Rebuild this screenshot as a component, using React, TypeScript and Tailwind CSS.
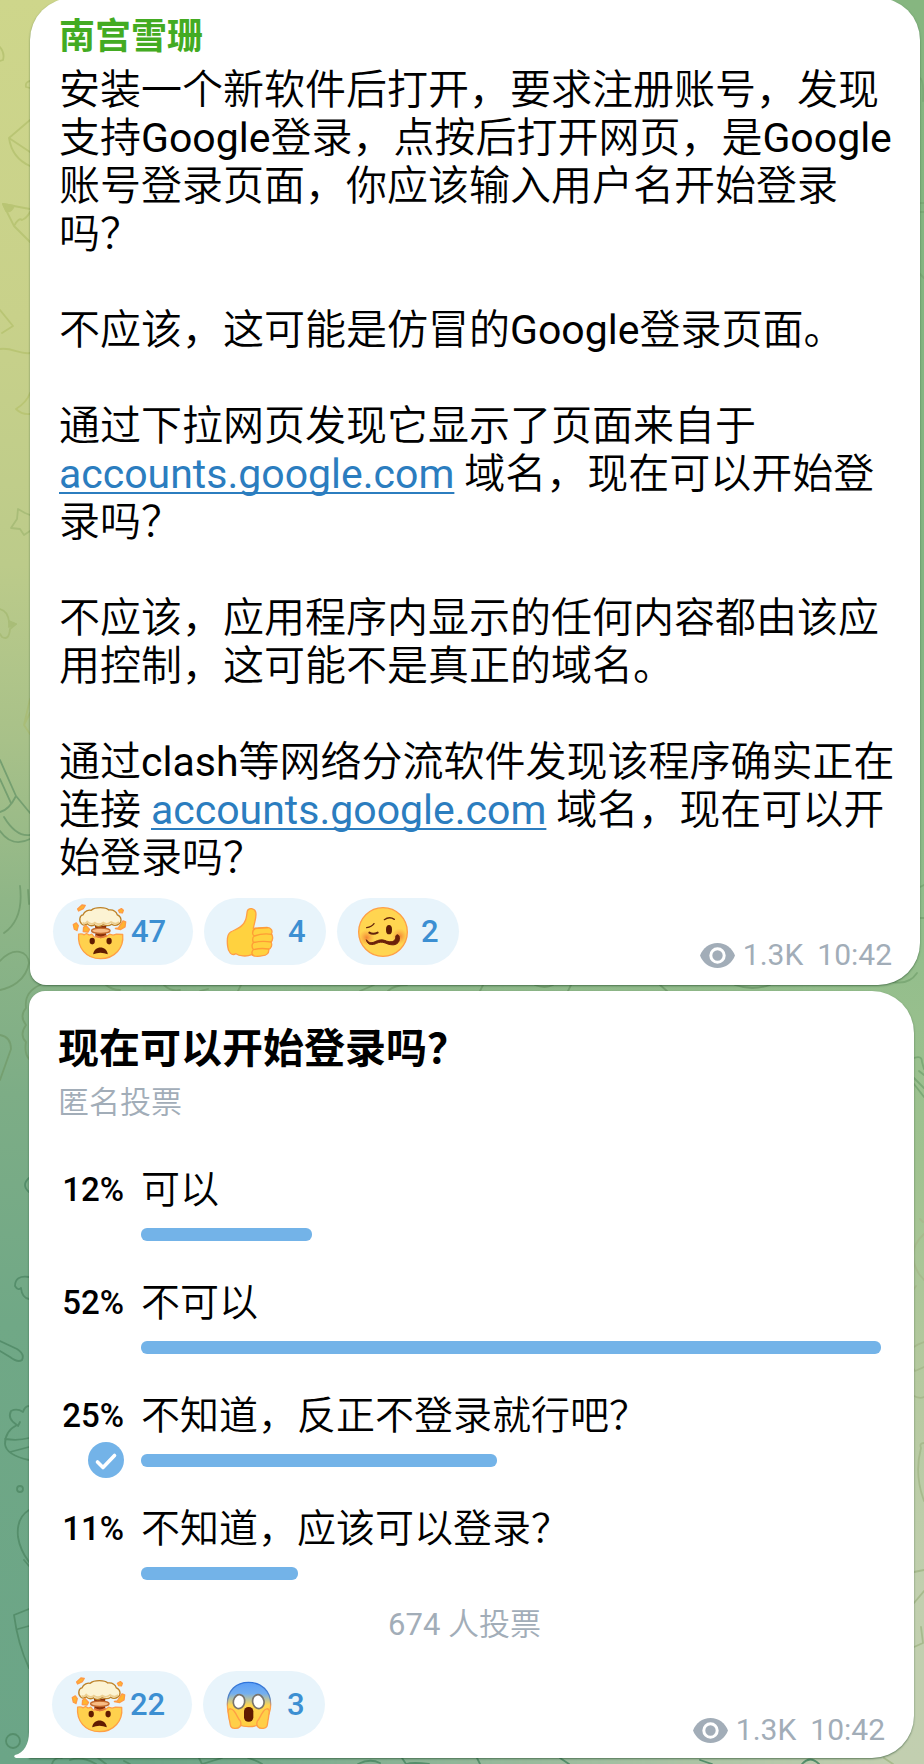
import type { ReactNode } from 'react';

const Exploding = () => (
  <svg aria-hidden="true" className="size-[57px] shrink-0" viewBox="212 127 170 172">
    <path d="M234 221Q246 219 250 223L258 219L266 224L274 221L281 230L318 228L327 221L338 224L348 221L367 222C371 262 344 295 300 295C257 295 230 263 234 221Z" fill="#ffd14d" stroke="#ff9f45" strokeWidth="4" strokeLinejoin="round" />
    <path d="M284 226Q288 211 283 196H318Q313 211 318 226L301 233Z" fill="#8a2f08" />
    <ellipse cx="301" cy="211" rx="28" ry="8" fill="#f8bd86" stroke="#c56a2c" strokeWidth="4" />
    <path d="M284 225Q301 236 318 225" fill="none" stroke="#df7a3b" strokeWidth="5" />
    <path d="M243 190C233 180 238 164 247 163C252 151 264 147 272 149C283 138 317 139 325 148C340 146 348 155 351 163C364 168 365 184 356 190C346 197 338 194 334 191C324 199 314 195 308 193C300 200 288 199 282 193C270 199 264 194 260 190C252 195 246 194 243 190Z" fill="#fcf3d3" stroke="#bd8127" strokeWidth="4" />
    <path d="M246 186Q254 192 260 183Q272 195 283 186Q295 196 308 186Q320 194 332 184Q346 194 356 184" fill="none" stroke="#edcf91" strokeWidth="5" />
    <g fill="#ffb52e" stroke="#ff9a45" strokeWidth="4" strokeLinejoin="round">
      <path d="M231 145L244 133L254 134L248 144L234 151Z" />
      <path d="M354 149L363 144L369 149L366 157L358 156Z" />
      <path d="M218 192L227 187L233 195L229 210L221 206Z" />
      <path d="M249 200L256 195L267 207L262 215L248 213Z" />
      <path d="M354 202L368 181L376 184L374 199L361 207L345 204Z" />
    </g>
    <g fill="#601b00">
      <ellipse cx="275" cy="242" rx="8" ry="10" />
      <ellipse cx="326" cy="242" rx="8" ry="10" />
      <path d="M278 282C280 254 320 254 322 282Q300 272 278 282Z" />
    </g>
  </svg>
);

const Thumb = () => (
  <svg aria-hidden="true" className="size-[52px] shrink-0" viewBox="674 135 156 156">
    <path d="M744 150C748 139 766 141 769 153C773 168 765 185 762 202L803 199C816 199 821 211 816 219C822 226 821 237 815 243C820 252 815 262 808 265C810 276 801 284 790 284C774 288 765 287 757 281C741 288 719 285 710 278C697 286 686 273 685 256C683 240 682 220 694 213C709 205 722 201 729 192C744 179 741 162 744 150Z" fill="#ffd23f" stroke="#ff9f45" strokeWidth="4" strokeLinejoin="round" />
    <path d="M760 215C760 203 768 202 776 202L804 200M765 225Q790 216 817 220M762 245Q787 238 816 243M762 266Q785 260 808 264M765 225Q757 229 762 245Q754 253 762 266Q754 275 761 282M760 215Q759 221 765 225" fill="none" stroke="#ff9d35" strokeWidth="4" strokeLinecap="round" />
  </svg>
);

const Woozy = () => (
  <svg aria-hidden="true" className="size-[52px] shrink-0" viewBox="1072 135 156 156">
    <defs>
      <radialGradient id="blush">
        <stop offset="0" stopColor="#f07832" stopOpacity=".85" />
        <stop offset="1" stopColor="#f99a37" stopOpacity="0" />
      </radialGradient>
    </defs>
    <circle cx="1150" cy="213" r="73" fill="#ffd550" stroke="#ff9f45" strokeWidth="4" />
    <circle cx="1101" cy="230" r="24" fill="url(#blush)" />
    <circle cx="1200" cy="226" r="24" fill="url(#blush)" />
    <g fill="none" stroke="#63230b" strokeLinecap="round">
      <path d="M1101 200Q1116 198 1123 188" strokeWidth="4" />
      <path d="M1154 176Q1169 165 1184 175" strokeWidth="4" />
      <path d="M1109 215Q1120 222 1134 215" strokeWidth="6" />
    </g>
    <ellipse cx="1168" cy="206" rx="9" ry="14" fill="#5d1b05" />
    <path d="M1100 236C1103 253 1118 253 1131 247C1149 238 1158 249 1173 251C1194 255 1203 239 1198 225C1195 218 1187 222 1188 229C1188 242 1174 245 1160 240C1142 232 1132 240 1121 244C1110 248 1104 241 1100 236Z" fill="#6b210a" stroke="#6b210a" strokeWidth="3" strokeLinejoin="round" />
  </svg>
);

const Scream = () => (
  <svg aria-hidden="true" className="size-[52px] shrink-0" viewBox="671 355 156 156">
    <defs>
      <linearGradient id="fear" x1="0" y1="0" x2="0" y2="1">
        <stop offset="0" stopColor="#5b9ff7" />
        <stop offset=".25" stopColor="#72aef0" />
        <stop offset=".52" stopColor="#ffd64f" />
        <stop offset="1" stopColor="#ffcf42" />
      </linearGradient>
      <linearGradient id="fear-edge" x1="0" y1="0" x2="0" y2="1">
        <stop offset="0" stopColor="#2f74dc" />
        <stop offset=".35" stopColor="#5585c4" />
        <stop offset=".55" stopColor="#ff9f45" />
      </linearGradient>
    </defs>
    <path d="M684 431C684 389 711 365 748 365C786 365 814 391 814 431C814 469 791 498 748 498C705 498 684 470 684 431Z" fill="url(#fear)" stroke="url(#fear-edge)" strokeWidth="4" />
    <g fill="#ffcf48" stroke="#ff9f45" strokeWidth="4" strokeLinejoin="round">
      <path d="M686 452C688 441 699 443 704 451C713 462 715 474 723 481C729 496 719 505 705 503C689 503 694 486 689 474Z" />
      <path d="M810 452C808 441 798 443 793 451C784 462 782 474 774 481C768 496 778 505 792 503C808 503 803 486 807 474Z" />
    </g>
    <g fill="#fff" stroke="#77736c" strokeWidth="5">
      <ellipse cx="719" cy="423" rx="17" ry="21" transform="rotate(12 719 423)" />
      <ellipse cx="777" cy="423" rx="17" ry="21" transform="rotate(-12 777 423)" />
    </g>
    <rect x="734" y="439" width="28" height="44" rx="13" fill="#601b00" />
  </svg>
);

const Reaction = ({ label, count, wide, children }: { label: string; count: number; wide?: boolean; children: ReactNode }) => (
  <button
    type="button"
    aria-label={`${label} ${count}`}
    className={
      'flex h-[67px] items-center rounded-full bg-[#e8f4fb] text-[31px] leading-none font-medium text-[#3c8fd2] ' +
      (wide ? 'w-[140px] gap-[3px] pl-[18px]' : 'w-[122px] gap-3 pl-5')
    }
  >
    {children}
    <span>{count}</span>
  </button>
);

const Meta = () => (
  <div className="flex items-center text-[30px] leading-9 text-[#a2adb8]">
    <svg aria-hidden="true" className="mr-2 h-[25px] w-[35px]" viewBox="0 0 35 25">
      <path d="M0 12.5C3 5 9 0 17.5 0S32 5 35 12.5C32 20 26 25 17.5 25S3 20 0 12.5Z" fill="currentColor" />
      <circle cx="17.5" cy="12.5" r="6.7" fill="currentColor" stroke="#fff" strokeWidth="3" />
    </svg>
    <span className="mr-3.5">1.3K</span>
    <time>10:42</time>
  </div>
);

const Doodles = () => (
  <svg aria-hidden="true" className="absolute inset-0 h-full w-full" viewBox="0 0 924 1764" preserveAspectRatio="none" fill="none" strokeWidth="1.8" strokeLinecap="round" strokeLinejoin="round">
    <g stroke="#b9c574">
      <path d="M0 47Q5 53 3 60L0 61M30 81Q25 82 26 87L30 88M30 120L9 138Q12 158 30 166M9 138L30 152" />
      <path d="M3 204L14 226L30 242M3 204L30 209M14 226Q19 217 22 220Q27 218 30 212" />
      <path d="M3 204L14 206Q11 213 6 211Z" fill="#b9c574" />
      <path d="M0 310L13 326L2 333M0 349C12 347 20 355 30 353M30 393Q27 402 16 409Q22 415 30 414" />
    </g>
    <g stroke="#a9bd78">
      <path d="M30 515L25 513L18 509L17 519L11 528L20 529L24 535L30 531M0 609Q8 611 9 622L16 624L10 629Q9 641 2 637L0 634" />
      <path d="M9 621L16 624L9 627Z" fill="#a9bd78" />
      <path d="M30 699L24 725L30 734M24 725L30 713" />
    </g>
    <g stroke="#759f70">
      <path d="M0 760L16 796Q9 810 0 812M0 779L11 803M16 796L30 813M0 831Q12 848 30 839M4 817Q16 837 30 835" />
      <path d="M20 886Q24 919 4 933M28 890L29 904M0 961C14 946 28 951 29 963C26 981 10 988 0 990" />
      <path d="M40 985Q24 992 26 1008Q19 1016 26 1025Q19 1035 26 1042Q24 1053 29 1059M0 1035Q11 1037 11 1049L0 1080" />
      <path d="M106 985Q112 990 120 990M164 985Q171 992 180 990M200 991L208 989M241 985L238 991M360 991L374 985M388 991Q394 985 407 985M483 985L480 991M535 985Q545 989 553 985M571 985L568 991M660 985L667 991M735 985Q752 991 770 985" />
    </g>
    <g stroke="#558e6b">
      <path d="M29 1178Q21 1185 29 1192M29 1277Q15 1275 15 1286Q18 1291 21 1288Q22 1298 29 1299M0 1341L17 1349Q25 1354 22 1360Q18 1363 10 1357L0 1351" />
      <path d="M17 1425Q7 1419 11 1411Q17 1408 23 1412Q25 1406 29 1406M17 1425Q5 1431 5 1444Q6 1455 29 1460M5 1439Q18 1441 29 1438M10 1452L29 1447M18 1426L20 1422" />
      <circle cx="20" cy="1489" r="3" />
      <path d="M29 1510Q16 1518 18 1537Q20 1550 29 1562M24 1560L29 1566M29 1609L14 1615Q18 1645 29 1668M18 1629L29 1626" />
      <circle cx="13" cy="1741" r="7" />
      <path d="M52 1764Q54 1757 62 1758M70 1760Q82 1756 96 1764M98 1758L106 1764M124 1761L130 1764M199 1758L202 1764L222 1758M248 1758Q258 1761 262 1764M358 1764Q370 1758 380 1763M402 1758L406 1764Q413 1762 429 1764M477 1758L480 1764M560 1758L569 1764M700 1760L712 1764M802 1764Q810 1755 819 1764" />
    </g>
    <g stroke="#7ca976">
      <path d="M920 78Q924 80 923 101M920 203H924M920 212H924M920 274L924 278M920 887L924 885M920 918H924M893 982Q909 985 917 973" />
      <path d="M914 1058Q922 1055 922 1062L924 1069M914 1078L924 1088M914 1084L924 1097M919 1071L924 1075" />
    </g>
    <g stroke="#a7ba8d">
      <path d="M920 1219L923 1222M924 1234Q905 1251 919 1274L924 1280M914 1289L916 1286M924 1342Q899 1350 915 1371L924 1367M914 1396Q920 1399 924 1397M924 1443Q919 1443 921 1448Q914 1474 924 1501M914 1572L924 1570M914 1603L924 1591M921 1627L923 1643L914 1647M884 1758L893 1764" />
    </g>
  </svg>
);

const link = (
  <a href="https://accounts.google.com" className="font-normal text-[#2b7dbf] underline decoration-2 underline-offset-4 [text-decoration-skip-ink:none]">
    accounts.google.com
  </a>
);

const google = <span className="font-normal">Google</span>;

const options = [
  { percent: 12, text: '可以' },
  { percent: 52, text: '不可以' },
  { percent: 25, text: '不知道，反正不登录就行吧？', chosen: true },
  { percent: 11, text: '不知道，应该可以登录？' },
];

const shadow = 'bg-white shadow-[0_1px_2px_rgba(20,60,30,0.55)]';

export default function App() {
  return (
    <main
      lang="zh-CN"
      className="relative isolate min-h-screen overflow-hidden bg-[linear-gradient(to_bottom,#ced68b_0%,#c8d18a_18%,#bccb8a_32%,#a8c189_42%,#8fb687_51%,#7dad86_62%,#70a886_75%,#6ba587_100%)] pb-1.5 font-[Roboto,'Noto_Sans_CJK_SC',sans-serif] text-black"
    >
      <div className="absolute inset-0 -z-10 bg-[linear-gradient(to_bottom,#86b680_0%,#84b583_35%,#91bd8b_52%,#a0c290_66%,#b5c99f_78%,#c1cfae_90%,#c2cfb0_100%)] [mask-image:linear-gradient(to_right,transparent_15%,black_96%)]" />
      <div className="absolute inset-0 -z-10">
        <Doodles />
      </div>

      <article className={`-mt-0.5 mr-1 ml-[30px] rounded-[42px] rounded-bl-2xl pt-3.5 pr-5 pb-5 pl-[29px] ${shadow}`}>
        <h2 className="text-[36px] leading-[50px] font-bold text-[#43ab22]">南宫雪珊</h2>
        <div className="mt-1 space-y-12 text-[41px] leading-[48px] font-[350]">
          <p>安装一个新软件后打开，要求注册账号，发现支持{google}登录，点按后打开网页，是{google}账号登录页面，你应该输入用户名开始登录吗？</p>
          <p>不应该，这可能是仿冒的{google}登录页面。</p>
          <p>通过下拉网页发现它显示了页面来自于 {link} 域名，现在可以开始登录吗？</p>
          <p>不应该，应用程序内显示的任何内容都由该应用控制，这可能不是真正的域名。</p>
          <p>通过<span className="font-normal">clash</span>等网络分流软件发现该程序确实正在连接 {link} 域名，现在可以开始登录吗？</p>
        </div>
        <footer className="mt-4 mr-2 -ml-1.5 flex items-end justify-between">
          <div className="flex gap-[11px]">
            <Reaction label="🤯" count={47} wide><Exploding /></Reaction>
            <Reaction label="👍" count={4}><Thumb /></Reaction>
            <Reaction label="🥴" count={2}><Woozy /></Reaction>
          </div>
          <div className="-mb-2"><Meta /></div>
        </footer>
      </article>

      <article className={`relative mt-1.5 mr-2.5 ml-[29px] rounded-[42px] rounded-tl-2xl rounded-bl-none px-[29px] pt-8 pb-5 ${shadow}`}>
        <h2 className="text-[41px] leading-[52px] font-bold">现在可以开始登录吗？</h2>
        <p className="mt-2 text-[31px] leading-10 font-[350] text-[#a2adb8]">匿名投票</p>
        <ul className="mt-[38px]">
          {options.map((o) => (
            <li key={o.percent} className="grid h-[113px] grid-cols-[66px_1fr] grid-rows-[56px_34px] gap-x-[17px] pr-1">
              <span className="text-right text-[33px] leading-[58px] font-medium">{o.percent}%</span>
              <span className="text-[39px] leading-[58px] font-[350]">{o.text}</span>
              <span className="flex items-center justify-end">
                {o.chosen && (
                  <svg role="img" aria-label="已选" className="size-9" viewBox="0 0 36 36">
                    <circle cx="18" cy="18" r="18" fill="#73b3e8" />
                    <path d="M9.5 20L15 25.5L26.5 13.5" fill="none" stroke="#fff" strokeWidth="3.6" strokeLinecap="round" strokeLinejoin="round" />
                  </svg>
                )}
              </span>
              <span className="flex items-center">
                <span className="h-[13px] rounded-md bg-[#73b3e8]" style={{ width: `${(o.percent / 52) * 100}%` }} />
              </span>
            </li>
          ))}
        </ul>
        <p className="pr-3.5 text-center text-[31px] leading-6 font-[350] text-[#a2adb8]">
          <span className="font-normal">674</span> 人投票
        </p>
        <footer className="mt-[34px] -ml-1.5 flex items-end justify-between">
          <div className="flex gap-[11px]">
            <Reaction label="🤯" count={22} wide><Exploding /></Reaction>
            <Reaction label="😱" count={3}><Scream /></Reaction>
          </div>
          <div className="-mb-2.5"><Meta /></div>
        </footer>
        <svg aria-hidden="true" className="absolute bottom-0 -left-[15px] h-[26px] w-4" viewBox="0 0 16 26">
          <path d="M16 0H15C15 12 10 21 1 23Q-1 25 2 26H16Z" fill="#fff" />
        </svg>
      </article>
    </main>
  );
}
